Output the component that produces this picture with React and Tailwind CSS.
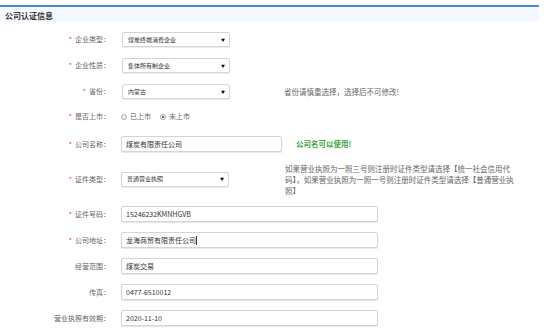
import React from "react";

const Label = ({ text, required }) => (
  <div className="w-[110px] shrink-0 text-right text-[7px] text-[#666]">
    {required && <span className="text-[#e4393c] mr-[3px]">*</span>}
    {text}：
  </div>
);

const Select = ({ value, width = "w-[108px]" }) => (
  <div
    className={`${width} h-[15px] flex items-center justify-between pl-[5px] pr-[4px] border border-[#d4d4d4] rounded-[2px] bg-white shadow-[0_1px_1px_rgba(0,0,0,0.08)]`}
  >
    <span className="text-[6px] text-[#333] leading-none">{value}</span>
    <span className="text-[4px] text-black leading-none">▼</span>
  </div>
);

const Input = ({ value, width = "w-[257px]", caret }) => (
  <div
    className={`${width} h-[16px] flex items-center pl-[4px] border border-[#d4d4d4] rounded-[2px] bg-white shadow-[0_1px_1px_rgba(0,0,0,0.1)]`}
  >
    <span className="text-[7px] text-[#333] leading-none">{value}</span>
    {caret && <span className="w-px h-[9px] bg-[#333]"></span>}
  </div>
);

const Radio = ({ checked, text }) => (
  <label className="flex items-center gap-[3px] text-[7px] text-[#666]">
    <span className="w-[6px] h-[6px] rounded-full border border-[#aaa] bg-[#f4f4f4] flex items-center justify-center">
      {checked && <span className="w-[2px] h-[2px] rounded-full bg-[#444]"></span>}
    </span>
    {text}
  </label>
);

export default function App() {
  return (
    <div
      className="w-[557px] h-[328px] bg-white overflow-hidden"
      style={{ fontFamily: '"Noto Sans CJK SC", "Liberation Sans", sans-serif' }}
    >
      {/* Header */}
      <div className="w-[539px] mt-[5px] border-t-2 border-[#4a8ad4] bg-[#f4f9ff] h-[17px] pl-[5px] pt-[5px]">
        <span className="text-[8px] font-bold text-[#333] leading-none block">公司认证信息</span>
      </div>

      <div className="flex flex-col mt-[10px]">
        <div className="flex items-center h-[15px]">
          <Label text="企业类型" required />
          <div className="ml-[12px]">
            <Select value="煤炭终端消费企业" />
          </div>
        </div>

        <div className="flex items-center h-[15px] mt-[11px]">
          <Label text="企业性质" required />
          <div className="ml-[12px]">
            <Select value="集体所有制企业" />
          </div>
        </div>

        <div className="flex items-center h-[15px] mt-[11px]">
          <Label text="省份" required />
          <div className="ml-[12px]">
            <Select value="内蒙古" />
          </div>
          <span className="ml-[54px] text-[7.5px] text-[#666]">省份请慎重选择，选择后不可修改!</span>
        </div>

        <div className="flex items-center h-[15px] mt-[10px]">
          <Label text="是否上市" required />
          <div className="ml-[11px] flex items-center gap-[9px]">
            <Radio text="已上市" />
            <Radio text="未上市" checked />
          </div>
        </div>

        <div className="flex items-center h-[16px] mt-[12px]">
          <Label text="公司名称" required />
          <div className="ml-[11px]">
            <Input value="煤炭有限责任公司" width="w-[161px]" />
          </div>
          <span className="ml-[14px] text-[7.5px] font-bold text-[#3aa23a]">公司名可以使用!</span>
        </div>

        <div className="flex items-center h-[34px] mt-[10px]">
          <Label text="证件类型" required />
          <div className="ml-[11px]">
            <Select value="普通营业执照" />
          </div>
          <p className="ml-[56px] whitespace-nowrap text-[7.5px] leading-[11px] text-[#666]">
            如果营业执照为一照三号则注册时证件类型请选择【统一社会信用代
            <br />
            码】，如果营业执照为一照一号则注册时证件类型请选择【普通营业执
            <br />
            照】
          </p>
        </div>

        <div className="flex items-center h-[16px] mt-[10px]">
          <Label text="证件号码" required />
          <div className="ml-[11px]">
            <Input value="15246232KMNHGVB" />
          </div>
        </div>

        <div className="flex items-center h-[16px] mt-[10px]">
          <Label text="公司地址" required />
          <div className="ml-[11px]">
            <Input value="龙海商贸有限责任公司" caret />
          </div>
        </div>

        <div className="flex items-center h-[16px] mt-[10px]">
          <Label text="经营范围" />
          <div className="ml-[11px]">
            <Input value="煤炭交易" />
          </div>
        </div>

        <div className="flex items-center h-[16px] mt-[10px]">
          <Label text="传真" />
          <div className="ml-[11px]">
            <Input value="0477-6510012" />
          </div>
        </div>

        <div className="flex items-center h-[16px] mt-[10px]">
          <Label text="营业执照有效期" />
          <div className="ml-[11px]">
            <Input value="2020-11-10" />
          </div>
        </div>
      </div>
    </div>
  );
}
